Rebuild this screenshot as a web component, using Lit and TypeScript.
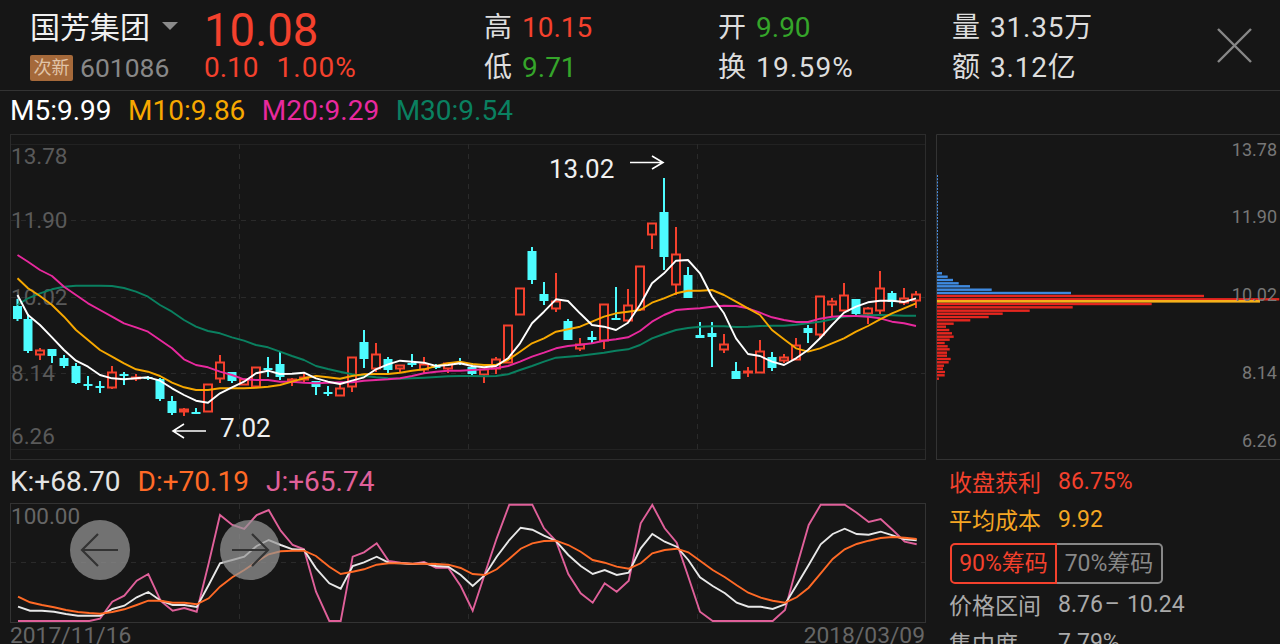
import { LitElement, html, css, svg } from "lit";
import { customElement } from "lit/decorators.js";

// candle: wickTop, wickBot, bodyTop, bodyBot, kind (c = cyan filled, r = red hollow)
const C: [number, number, number, number, string][] = [
  [299,321,306,319,"c"],[314,353,319,351,"c"],[348,360,350,355,"r"],[349,363,349,356,"c"],[355,368,358,366,"c"],
  [363,384,366,383,"c"],[376,390,384,386,"c"],[381,393,386,388,"c"],[366,389,372,388,"r"],[372,385,374,376,"c"],
  [374,381,377,379,"r"],[376,380,377,379,"c"],[378,401,379,399,"c"],[396,415,401,413,"c"],[408,416,409,412,"r"],
  [408,413,412,413,"c"],[384,412,384,412,"r"],[355,383,362,379,"r"],[372,383,372,381,"c"],[379,385,379,385,"r"],
  [367,388,367,387,"r"],[357,377,368,370,"c"],[352,380,364,377,"c"],[378,386,379,382,"r"],[373,383,377,380,"r"],
  [381,395,381,387,"c"],[386,396,392,394,"c"],[384,396,388,396,"r"],[357,392,357,387,"r"],[330,368,342,359,"c"],
  [343,372,354,369,"r"],[357,373,359,370,"c"],[365,372,365,369,"r"],[354,367,363,365,"c"],[357,373,364,370,"r"],
  [364,369,366,368,"c"],[363,373,363,369,"r"],[358,365,362,364,"c"],[363,375,367,374,"c"],[369,383,369,375,"r"],
  [357,374,359,369,"r"],[325,363,325,363,"r"],[288,315,288,315,"r"],[247,284,251,280,"c"],[282,305,294,301,"c"],
  [273,312,301,309,"r"],[319,340,321,340,"c"],[338,351,344,349,"r"],[331,343,337,340,"c"],[304,349,304,341,"r"],
  [287,320,318,320,"c"],[289,322,305,321,"r"],[266,311,266,310,"r"],[223,249,223,235,"r"],[178,270,212,257,"c"],
  [227,295,254,285,"r"],[267,298,275,298,"c"],[322,338,335,338,"c"],[322,367,333,337,"c"],[334,353,344,350,"r"],
  [362,379,371,379,"c"],[367,377,371,373,"r"],[340,373,351,373,"r"],[352,371,357,368,"c"],[354,363,357,361,"r"],
  [338,360,345,360,"r"],[325,343,328,333,"c"],[296,338,296,335,"r"],[298,317,301,305,"r"],[283,311,295,311,"r"],
  [299,315,299,314,"c"],[307,324,308,314,"r"],[271,314,288,311,"r"],[291,307,293,302,"c"],[288,305,298,303,"r"],
  [291,308,294,301,"r"],
];
const cx = (i: number) => (i === 0 ? 17.5 : i === 1 ? 28 : 40 + 12 * (i - 2));

const M5 = [495,555,585,622,660,692,710,735,745,748,745,742,752,775,795,812,818,790,772,755,730,722,732,731,728,745,755,762,752,742,718,703,692,695,698,708,705,700,708,712,708,685,640,580,545,508,513,550,585,590,600,578,525,460,430,392,390,430,500,550,625,672,678,695,705,685,660,625,585,548,530,517,512,512,516,505];
const M10 = [445,475,498,525,560,600,630,660,680,700,718,725,738,758,772,780,780,775,775,775,773,770,765,755,745,738,742,746,738,733,732,732,728,722,718,708,700,695,702,705,705,690,665,640,625,605,598,590,575,560,550,545,540,518,505,490,482,482,480,495,515,535,555,600,628,655,665,655,640,625,605,588,568,550,535,520];
const M20 = [375,395,420,438,470,495,520,540,560,580,592,605,630,655,688,705,712,725,735,748,750,750,755,755,758,760,758,757,757,752,750,748,745,738,730,725,722,722,720,718,715,708,695,680,668,655,648,644,640,632,628,622,603,575,555,540,537,535,530,527,528,535,548,562,570,576,576,566,560,558,558,560,565,575,580,588];
const M30 = [525,505,490,478,470,467,467,467,468,474,485,500,525,545,570,590,603,610,622,632,645,652,665,678,690,708,717,725,733,738,742,745,746,745,743,741,739,738,738,739,738,733,720,708,695,683,680,677,673,668,662,658,645,625,612,600,594,590,589,589,591,590,588,587,587,584,580,575,568,560,557,556,555,556,557,557];

// KDJ series: pairs of (u, v) in 3x crop space, split at the second crop (x offset 470)
const pairs = (a: number[], b: number[]) => {
  const p: string[] = [];
  for (let i = 0; i < a.length; i += 2) p.push(`${(a[i] / 3).toFixed(1)},${(460 + a[i + 1] / 3).toFixed(1)}`);
  for (let i = 0; i < b.length; i += 2) p.push(`${(470 + b[i] / 3).toFixed(1)},${(460 + b[i + 1] / 3).toFixed(1)}`);
  return p.join(" ");
};
const JL = pairs([54,483,90,483,126,483,162,483,198,483,234,483,268,483,300,476,337,425,373,407,410,362,445,342,482,423,518,452,553,444,590,455,626,310,660,165,697,195,733,207,770,165,806,150,842,212,878,255,912,268,948,395,988,483,1022,483,1058,290,1092,277,1130,250,1166,303,1202,308,1238,312,1272,306,1308,323,1345,323,1382,378],
  [8,452,45,340,80,235,118,134,152,134,187,134,222,205,258,243,295,342,332,400,368,428,404,370,440,395,476,362,512,190,547,135,584,205,620,248,655,350,690,455,728,483,765,483,800,483,835,483,872,483,908,483,945,450,980,320,1016,195,1052,134,1088,134,1124,134,1160,158,1196,186,1232,177,1268,210,1304,245,1340,253]);
const KL = pairs([54,440,90,452,126,452,162,455,198,462,234,467,268,467,300,467,337,447,373,437,410,412,445,396,482,422,518,435,553,435,590,441,626,375,660,310,697,300,733,290,770,258,806,240,842,255,878,268,912,270,948,325,988,370,1022,386,1058,318,1092,307,1130,290,1166,308,1202,310,1238,312,1272,310,1308,318,1345,320,1382,345],
  [8,378,45,345,80,290,118,240,152,203,187,209,222,227,258,243,295,285,332,318,368,342,404,330,440,345,476,338,512,265,547,222,584,245,620,260,655,300,690,352,728,378,765,400,800,428,835,440,872,440,908,447,945,433,980,375,1016,315,1052,253,1088,222,1124,206,1160,222,1196,224,1232,215,1268,226,1304,238,1340,241]);
const DL = pairs([54,410,90,427,126,435,162,442,198,450,234,456,268,459,300,461,337,456,373,448,410,435,445,422,482,422,518,428,553,428,590,433,626,415,660,380,697,352,733,330,770,305,806,283,842,274,878,272,912,272,948,288,988,320,1022,342,1058,335,1092,328,1130,314,1166,310,1202,310,1238,311,1272,311,1308,312,1345,314,1382,324],
  [8,342,45,345,80,328,118,296,152,266,187,250,222,243,258,242,295,255,332,275,368,300,404,308,440,320,476,326,512,310,547,280,584,270,620,266,655,277,690,302,728,330,765,352,800,376,835,398,872,413,908,422,945,428,980,412,1016,383,1052,340,1088,297,1124,268,1160,252,1196,242,1232,234,1268,231,1304,233,1340,237]);

// chip distribution: [crop v, crop u end]
const BLUE = [[430,36],[440,53],[450,69],[460,86],[469,120],[479,185],[489,423]];
const RED = [[498,822],[508,1048],[522,665],[532,428],[542,299],[551,218],[561,176],[571,121],[581,71],[590,48],[600,58],[610,66],[620,71],[629,59],[639,44],[649,53],[658,59],[668,51],[677,51],[687,62],[697,56],[707,42],[716,39],[726,45],[736,44],[746,27]];

const line = (ys: number[], color: string) =>
  svg`<polyline points=${ys.map((v, i) => `${cx(i)},${(130 + v / 3).toFixed(1)}`).join(" ")} fill="none" stroke=${color} stroke-width="1.9" stroke-linejoin="round"/>`;

@customElement("app-root")
export class AppRoot extends LitElement {
  static styles = css`
    :host { display: block; width: 1280px; height: 644px; overflow: hidden; background: #161616; color: #e4e4e4; font-family: Roboto, "Noto Sans CJK SC", sans-serif; }
    .head { box-sizing: border-box; border-bottom: 1px solid #333; display: grid; grid-template-columns: 174px 280px 234px 234px 1fr; padding-left: 30px; padding-top: 8px; height: 91px; }
    .r1, .r2 { height: 40px; line-height: 40px; white-space: nowrap; display: flex; align-items: center; }
    .name { font-size: 30px; color: #f0f0f0; }
    .caret { width: 0; height: 0; border: 8px solid transparent; border-top: 8px solid #8a8a8a; border-bottom: 0; margin-left: 12px; margin-top: -5px; }
    .badge { background: #a5693a; color: #e0c4a8; font-size: 18px; line-height: 26px; height: 26px; padding: 0 3.5px; border-radius: 2px; margin-right: 7px; }
    .code { font-size: 26.5px; color: #888; }
    .price { font-size: 45.5px; line-height: 34px; color: #f4412d; padding-top: 6px; box-sizing: border-box; }
    .chg { font-size: 28px; color: #f4412d; display: flex; gap: 18px; }
    .stat { font-size: 28px; display: flex; gap: 10px; color: #ddd; }
    .wide { letter-spacing: 0.8px; }
    .wider { letter-spacing: 1.2px; }
    .up { color: #f4412d; } .down { color: #35a52a; }
    .pct { letter-spacing: 1px; }
    .quote { display: flex; }
    .close { padding-top: 20px; margin-left: 124px; }
    .body { display: grid; grid-template-columns: 926px 1fr; }
    .legend { height: 43px; display: flex; align-items: center; padding-left: 10px; font-size: 28px; gap: 17px; white-space: nowrap; }
    .legend.ma { color: #fff; padding-bottom: 4px; box-sizing: border-box; gap: 16.5px; }
    .m10 { color: #f7a800; } .m20 { color: #e8299e; } .m30 { color: #0a8060; }
    .d { color: #ff6a26; } .j { color: #e0609a; } .k { color: #e4e4e4; }
    svg { display: block; }
    svg text { font-family: Roboto, sans-serif; }
    .kdj { position: relative; height: 141px; }
    .nav { position: absolute; width: 60px; height: 60px; border-radius: 50%; background: rgba(150,150,150,.72); top: 17px; display: flex; align-items: center; justify-content: center; }
    .nav.prev { left: 70px; } .nav.next { left: 220px; }
    .side { margin-top: 43px; margin-left: 10px; display: flex; flex-direction: column; }
    .stats { padding: 2px 0 0 13px; font-size: 23px; }
    .row { height: 38px; display: flex; align-items: center; gap: 17px; white-space: nowrap; color: #aaa; }
    .row.o { color: #f5a623; } .row.r { color: #f4412d; }
    .range { display: flex; gap: 0; }
    .dash { margin: 0 7px 0 2px; }
    .conc { margin-left: 23px; }
    .tabs { display: flex; height: 41px; margin: 5px 0 1px 1px; }
    .tab { box-sizing: border-box; height: 41px; line-height: 37px; width: 106px; text-align: center; border: 2px solid #888; color: #888; border-radius: 0 5px 5px 0; border-left: 0; white-space: nowrap; }
    .tab.on { color: #f4412d; border: 2px solid #f4412d; border-radius: 5px 0 0 5px; width: 107px; }
  `;

  candles() {
    return C.map(([wt, wb, bt, bb, k], i) => {
      const x = cx(i);
      const col = k === "c" ? "#4dfcff" : "#f4412d";
      const w = svg`<rect x=${x - 1} y=${wt} width="2" height=${wb - wt} fill=${col}/>`;
      if (k === "c") return svg`${w}<rect x=${x - 4.5} y=${bt} width="9" height=${Math.max(bb - bt, 2)} fill=${col}/>`;
      return svg`${w}<rect x=${x - 4} y=${bt + 0.5} width="8" height=${Math.max(bb - bt - 1, 1)} fill="#161616" stroke=${col} stroke-width="2"/>`;
    });
  }

  mainChart() {
    const labels: [string, number][] = [["13.78", 164], ["11.90", 228], ["10.02", 305], ["8.14", 381], ["6.26", 444]];
    const vx = [239.5, 468.5, 697.5];
    const hy = [220.5, 297.5, 373.5];
    return html`<svg width="926" height="326" viewBox="0 134 926 326">
      <rect x="10.5" y="134.5" width="915" height="325" fill="none" stroke="#2c2c2c"/>
      <path d="M11 144.5H925M11 449.5H925" stroke="#222"/>
      ${hy.map((y) => svg`<path d="M11 ${y}H925" stroke="#2a2a2a" stroke-dasharray="5 5"/>`)}
      ${vx.map((x) => svg`<path d="M${x} 144V449" stroke="#2a2a2a" stroke-dasharray="5 5"/>`)}
      ${labels.map(([t, y]) => svg`<text x="11" y=${y} font-size="22.5" fill="#5a5a5a">${t}</text>`)}
      ${this.candles()}
      ${line(M30, "#0a8060")}${line(M20, "#e8299e")}${line(M10, "#f7a800")}${line(M5, "#fff")}
      <path d="M206 431H173M184 424L173 431L184 438" fill="none" stroke="#fff" stroke-width="1.6"/>
      <text x="220" y="437" font-size="26" fill="#f0f0f0">7.02</text>
      <text x="549" y="178" font-size="26" fill="#f0f0f0">13.02</text>
      <path d="M630 162.5H663M652 156L663 162.5L652 169" fill="none" stroke="#fff" stroke-width="1.6"/>
    </svg>`;
  }

  kdjChart() {
    return html`<svg width="926" height="141" viewBox="0 503 926 141">
      <rect x="10.5" y="503.5" width="915" height="119" fill="none" stroke="#333"/>
      <path d="M11 562.5H925" stroke="#2a2a2a" stroke-dasharray="5 5"/>
      ${[239.5, 468.5, 697.5].map((x) => svg`<path d="M${x} 504V622" stroke="#2a2a2a" stroke-dasharray="5 5"/>`)}
      <text x="11" y="524" font-size="22.5" fill="#666">100.00</text>
      <polyline points=${JL} fill="none" stroke="#e0609a" stroke-width="1.9"/>
      <polyline points=${KL} fill="none" stroke="#e8e8e8" stroke-width="1.9"/>
      <polyline points=${DL} fill="none" stroke="#ff6a26" stroke-width="1.9"/>
      <text x="10" y="643" font-size="22.8" fill="#666">2017/11/16</text>
      <text x="925" y="643" font-size="22.8" fill="#666" text-anchor="end">2018/03/09</text>
    </svg>`;
  }

  chips() {
    const bar = (v: number, u: number, c: string) => {
      const h = 2.4;
      return svg`<rect x="937" y=${(130 + v / 3 - h / 2).toFixed(1)} width=${((u - 21) / 3).toFixed(1)} height=${h} fill=${c}/>`;
    };
    const dots = Array.from({ length: 30 }, (_, i) => 135 + i * 9.7);
    return html`<svg width="344" height="326" viewBox="936 134 344 326">
      <path d="M936.5 460V134.5H1280M936 459.5H1280" fill="none" stroke="#333"/>
      ${dots.map((v) => svg`<rect x="937" y=${130 + v / 3} width="1" height="2" fill="#4a90e2"/>`)}
      ${BLUE.map(([v, u]) => bar(v, u, "#3f8ae0"))}
      ${RED.map(([v, u]) => bar(v, u, "#e5261f"))}
      <rect x="937" y="300" width="323" height="2.6" fill="#f6b01a"/>
      ${([["13.78", 156], ["11.90", 223], ["10.02", 301], ["8.14", 379], ["6.26", 447]] as [string, number][]).map(
        ([t, y]) => svg`<text x="1277" y=${y} font-size="18" fill="#777" text-anchor="end">${t}</text>`)}
    </svg>`;
  }

  render() {
    return html`
      <div class="head">
        <div>
          <div class="r1 name">国芳集团<span class="caret"></span></div>
          <div class="r2"><span class="badge">次新</span><span class="code">601086</span></div>
        </div>
        <div>
          <div class="r1 price">10.08</div>
          <div class="r2 chg"><span>0.10</span><span class="pct">1.00%</span></div>
        </div>
        <div>
          <div class="r1 stat">高<span class="up">10.15</span></div>
          <div class="r2 stat">低<span class="down">9.71</span></div>
        </div>
        <div>
          <div class="r1 stat">开<span class="down">9.90</span></div>
          <div class="r2 stat">换<span class="wider">19.59%</span></div>
        </div>
        <div class="quote">
          <div>
            <div class="r1 stat">量<span class="wide">31.35万</span></div>
            <div class="r2 stat">额<span class="wide">3.12亿</span></div>
          </div>
          <div class="close">
            <svg width="35" height="35" viewBox="0 0 35 35"><path d="M1 1L34 34M34 1L1 34" stroke="#888" stroke-width="2.4" fill="none"/></svg>
          </div>
        </div>
      </div>
      <div class="body">
        <div>
          <div class="legend ma"><span>M5:9.99</span><span class="m10">M10:9.86</span><span class="m20">M20:9.29</span><span class="m30">M30:9.54</span></div>
          ${this.mainChart()}
          <div class="legend"><span class="k">K:+68.70</span><span class="d">D:+70.19</span><span class="j">J:+65.74</span></div>
          <div class="kdj">
            ${this.kdjChart()}
            <div class="nav prev">
              <svg width="40" height="34" viewBox="0 0 40 34"><path d="M38 17H2M18 1L2 17L18 33" fill="none" stroke="#333" stroke-width="2.2"/></svg>
            </div>
            <div class="nav next">
              <svg width="40" height="34" viewBox="0 0 40 34"><path d="M2 17H38M22 1L38 17L22 33" fill="none" stroke="#333" stroke-width="2.2"/></svg>
            </div>
          </div>
        </div>
        <div class="side">
          ${this.chips()}
          <div class="stats">
            <div class="row r"><span>收盘获利</span><span>86.75%</span></div>
            <div class="row o"><span>平均成本</span><span>9.92</span></div>
            <div class="tabs"><div class="tab on">90%筹码</div><div class="tab">70%筹码</div></div>
            <div class="row"><span>价格区间</span><span class="range"><span>8.76</span><span class="dash">–</span><span>10.24</span></span></div>
            <div class="row"><span>集中度</span><span class="conc">7.79%</span></div>
          </div>
        </div>
      </div>
    `;
  }
}
